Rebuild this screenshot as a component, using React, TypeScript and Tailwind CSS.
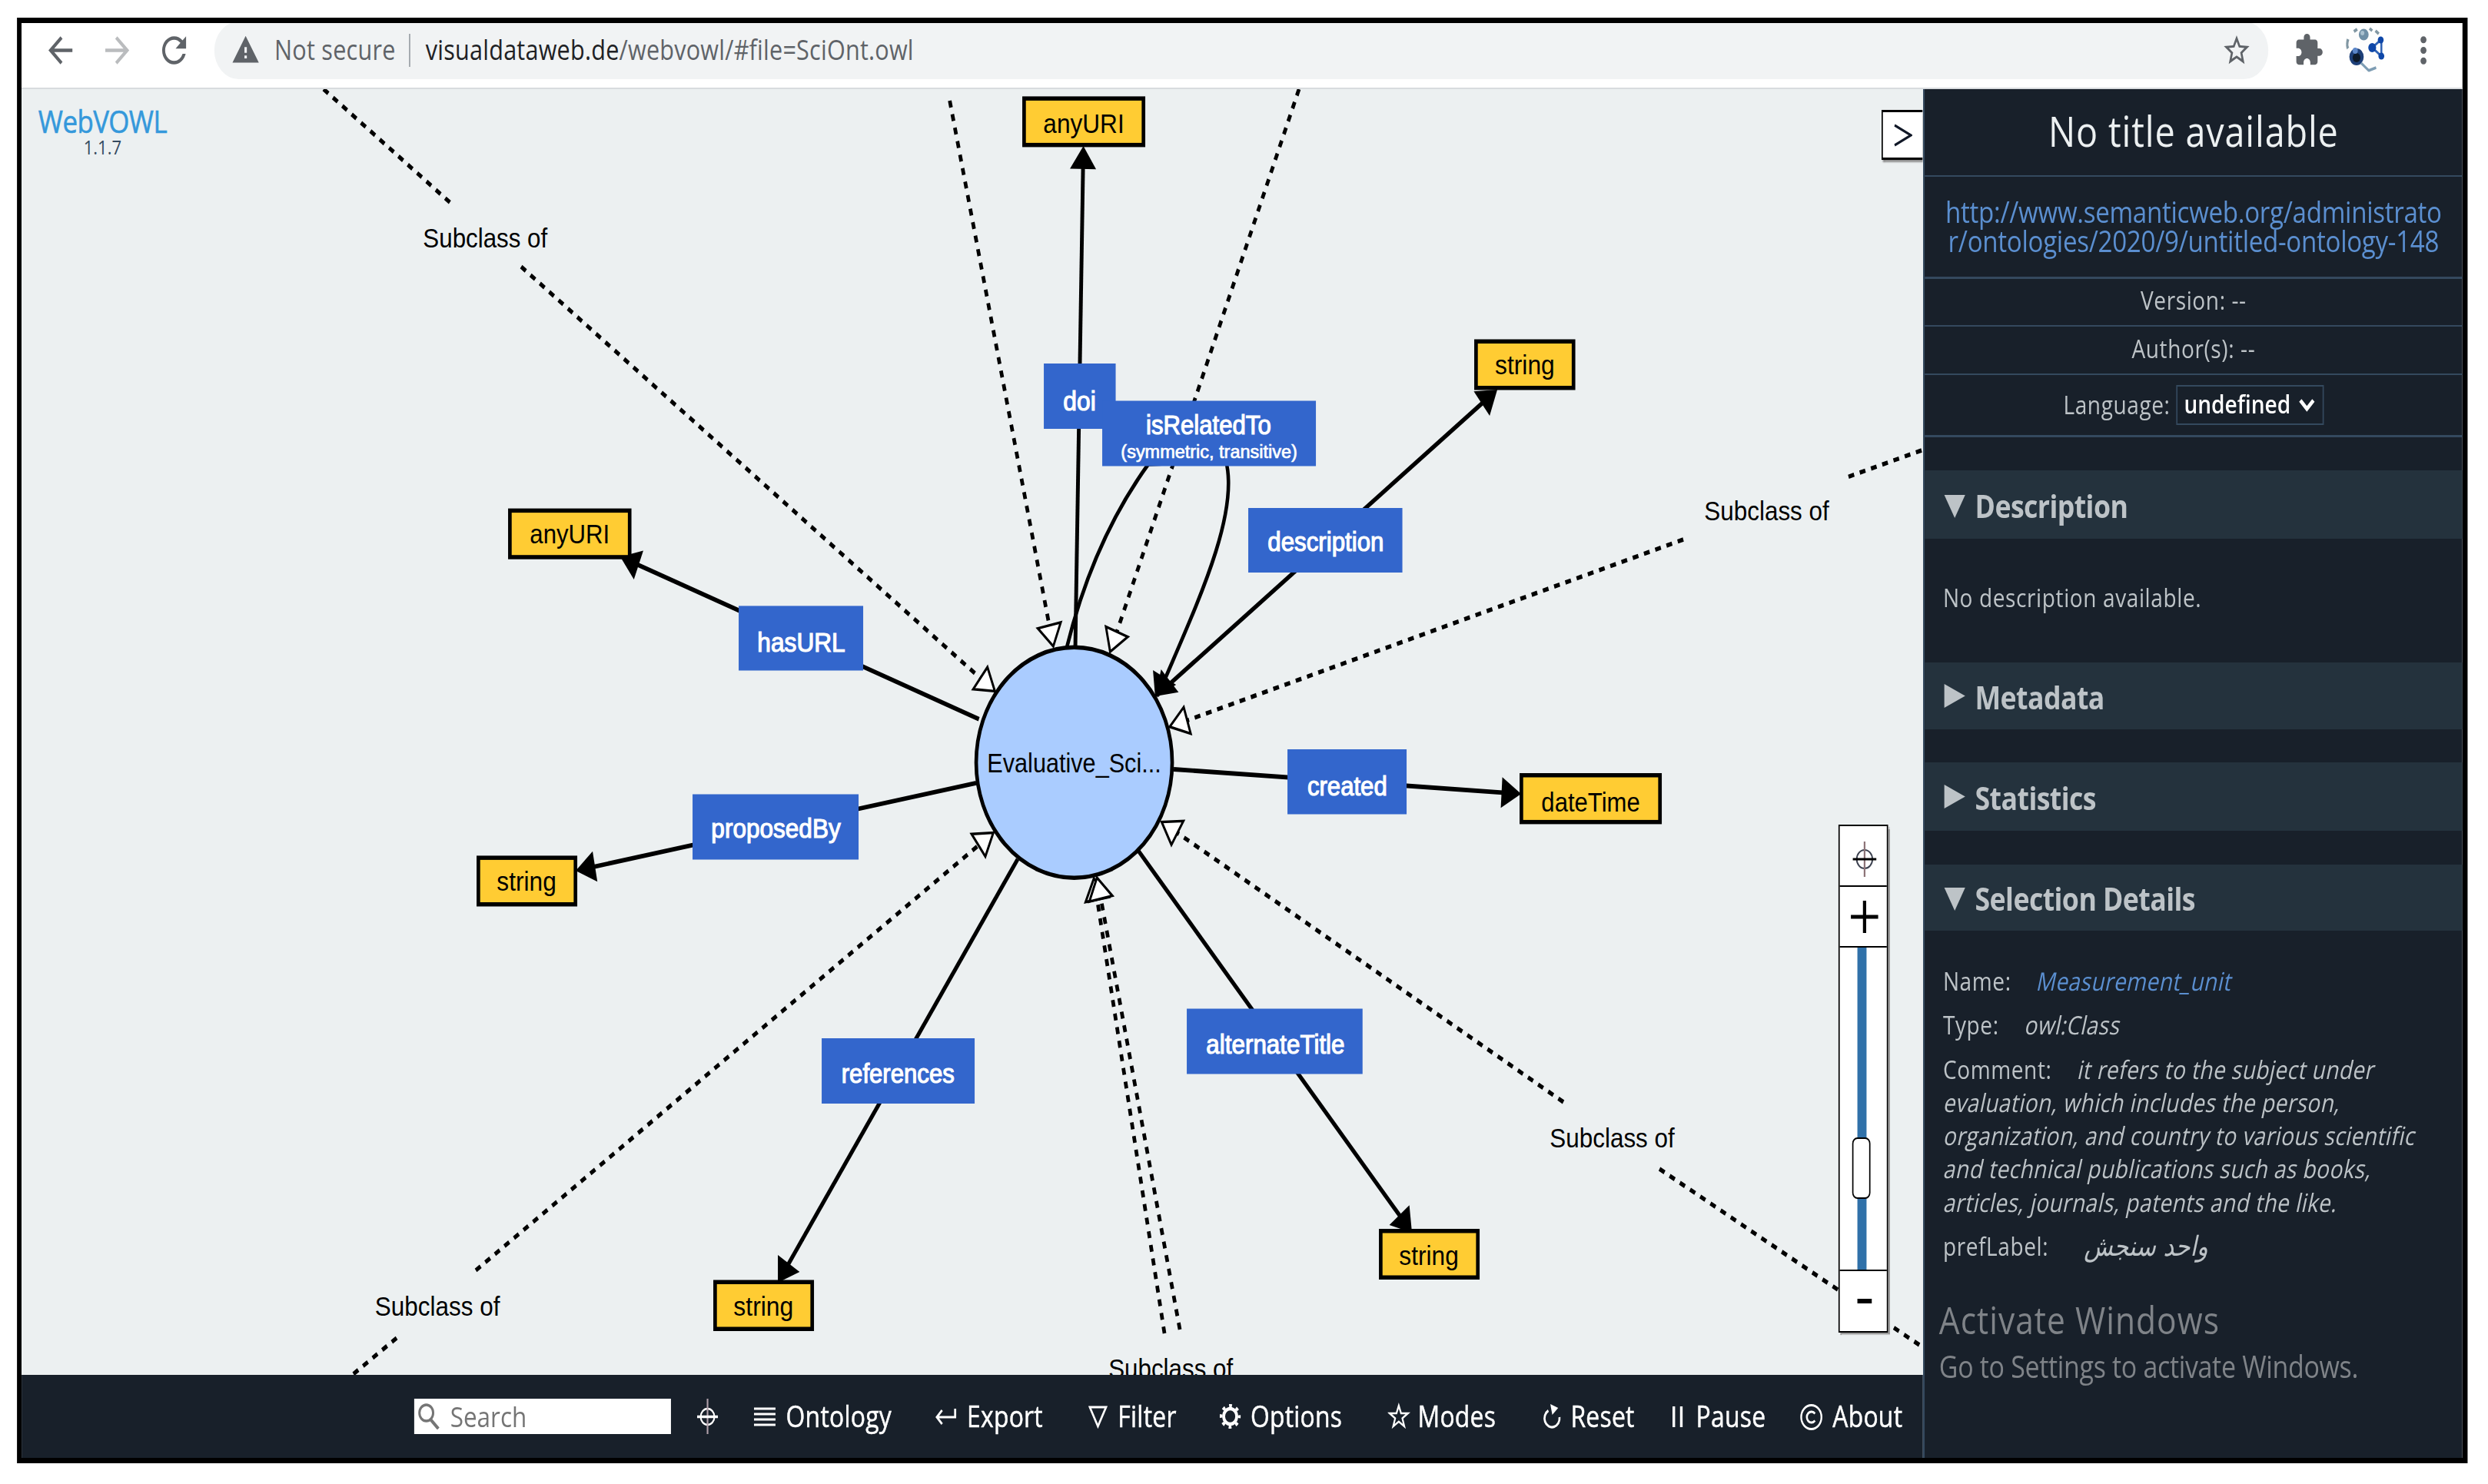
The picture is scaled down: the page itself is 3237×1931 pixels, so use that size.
import type { ReactNode } from 'react'
import clsx from 'clsx'
import {
  MdArrowBack,
  MdArrowForward,
  MdExtension,
  MdMoreVert,
  MdRefresh,
  MdStarBorder,
  MdWarning,
} from 'react-icons/md'

// The whole window is squeezed horizontally by this factor.
const SQUEEZE = 0.85
const ORIGIN_X = 28
const ORIGIN_Y = 116

const px = (x: number) => (x - ORIGIN_X) / SQUEEZE
const py = (y: number) => y - ORIGIN_Y

type Point = [number, number]

type Box = {
  label: string
  rect: [number, number, number, number]
  text: [number, number, number]
  sub?: { label: string; text: [number, number, number] }
}

const DATATYPES: Box[] = [
  { label: 'anyURI', rect: [1330, 125.4, 1490, 191.4], text: [1359, 1461, 173] },
  { label: 'string', rect: [1918, 441.5, 2049.5, 507.5], text: [1946.7, 2021, 487.4] },
  { label: 'anyURI', rect: [661, 661.6, 821.5, 727.7], text: [691, 791.5, 707] },
  { label: 'string', rect: [620, 1113.4, 751, 1179.5], text: [648, 722, 1159.4] },
  { label: 'dateTime', rect: [1977, 1006, 2162, 1072.4], text: [2007, 2132, 1056] },
  { label: 'string', rect: [928, 1665.5, 1059, 1732], text: [956, 1030.6, 1712] },
  { label: 'string', rect: [1794, 1599, 1925, 1665], text: [1822, 1896, 1646] },
]

const PROPERTIES: Box[] = [
  { label: 'doi', rect: [1358, 473, 1451.5, 558], text: [1385, 1424, 533.8] },
  {
    label: 'isRelatedTo',
    rect: [1434, 521.5, 1712, 606.5],
    text: [1492.7, 1652, 565.4],
    sub: { label: '(symmetric, transitive)', text: [1460, 1686, 596] },
  },
  { label: 'description', rect: [1624, 661, 1824.5, 745], text: [1651, 1798.7, 717] },
  { label: 'hasURL', rect: [961, 788.4, 1123, 872.5], text: [987, 1098, 847.8] },
  { label: 'proposedBy', rect: [901, 1033.5, 1117, 1118.5], text: [927, 1092, 1089.7] },
  { label: 'created', rect: [1675, 975, 1830, 1059.5], text: [1702.6, 1803, 1035] },
  { label: 'alternateTitle', rect: [1544, 1312.5, 1772.7, 1397.5], text: [1571, 1747.8, 1371.5] },
  { label: 'references', rect: [1069, 1351, 1268, 1436], text: [1096.4, 1240, 1409] },
]

const SUBCLASS_LABELS: [number, number, number][] = [
  [552, 710.5, 322],
  [2219, 2378, 677],
  [2018, 2177, 1492.6],
  [489.5, 648.7, 1712.5],
  [1443.8, 1602.5, 1793],
]

const SOLID: { from: Point; to: Point }[] = [
  { from: [1399, 842], to: [1409.5, 190] },
  { from: [1273.6, 935.7], to: [807, 724.5] },
  { from: [1270, 1018.8], to: [749, 1133] },
  { from: [1527, 1001], to: [1979, 1033] },
  { from: [1481, 1107], to: [1837, 1604] },
  { from: [1324, 1118], to: [1012, 1669] },
  { from: [1505, 905], to: [1948, 507] },
]

const DOTTED: { from: Point; to: Point; arrow?: boolean }[] = [
  { from: [421, 116], to: [586, 264] },
  { from: [678, 347], to: [1295, 900], arrow: true },
  { from: [1235.6, 131], to: [1370.5, 842], arrow: true },
  { from: [1690, 116], to: [1444, 849], arrow: true },
  { from: [2500, 586], to: [2403, 621] },
  { from: [2190, 702], to: [1521, 946], arrow: true },
  { from: [2034, 1434], to: [1510.6, 1069], arrow: true },
  { from: [2159, 1521], to: [2500, 1752] },
  { from: [1515, 1735], to: [1423, 1142], arrow: true },
  { from: [1535, 1730], to: [1427, 1141], arrow: true },
  { from: [619, 1653], to: [1293, 1083], arrow: true },
  { from: [516, 1741], to: [450, 1796] },
]

function Arrow({ from, to, hollow }: { from: Point; to: Point; hollow?: boolean }) {
  const dx = px(to[0]) - px(from[0])
  const dy = to[1] - from[1]
  const angle = (Math.atan2(dy, dx) * 180) / Math.PI

  return (
    <path
      d={hollow ? 'M-29 -18L-1 0L-29 18Z' : 'M-30 -20L0 0L-30 20Z'}
      transform={`translate(${px(to[0])} ${py(to[1])}) rotate(${angle})`}
      className={hollow ? 'fill-white stroke-black' : 'fill-black'}
      strokeWidth={hollow ? 3.4 : 0}
    />
  )
}

// Ends the stroke before the arrowhead so that it does not poke through the tip.
function shorten(from: Point, to: Point, by: number): Point {
  const dx = px(to[0]) - px(from[0])
  const dy = to[1] - from[1]
  const len = Math.hypot(dx, dy)
  return [px(to[0]) - (dx / len) * by, py(to[1]) - (dy / len) * by]
}

function Label({ at, size = 35.5, className, children }: {
  at: [number, number, number]
  size?: number
  className?: string
  children: string
}) {
  const [x1, x2, y] = at
  return (
    <text
      x={px(x1) - 2}
      y={py(y)}
      fontSize={size}
      textLength={(x2 - x1) / SQUEEZE + 4}
      lengthAdjust="spacingAndGlyphs"
      className={className}
    >
      {children}
    </text>
  )
}

function Graph() {
  return (
    <svg
      width={2910}
      height={1673}
      className="block font-['Liberation_Sans',Arial,sans-serif]"
    >
      {DOTTED.map(({ from, to, arrow }, i) => {
        const end = shorten(from, to, arrow ? 28 : 0)
        return (
          <g key={i}>
            <line
              x1={px(from[0])}
              y1={py(from[1])}
              x2={end[0]}
              y2={end[1]}
              className="stroke-black"
              strokeWidth={5.6}
              strokeDasharray="9 9"
            />
            {arrow && <Arrow from={from} to={to} hollow />}
          </g>
        )
      })}

      {SOLID.map(({ from, to }, i) => {
        const end = shorten(from, to, 20)
        return (
          <g key={i}>
            <line
              x1={px(from[0])}
              y1={py(from[1])}
              x2={end[0]}
              y2={end[1]}
              className="stroke-black"
              strokeWidth={5.8}
            />
            <Arrow from={from} to={to} />
          </g>
        )
      })}

      {/* isRelatedTo loops back to its own class */}
      <path
        d={`M${px(1388)} ${py(842)} C${px(1412)} ${py(745)} ${px(1450)} ${py(665)} ${px(1494)} ${py(604)} L${px(1595)} ${py(600)} C${px(1612)} ${py(668)} ${px(1560)} ${py(780)} ${px(1515)} ${py(885)}`}
        className="fill-none stroke-black"
        strokeWidth={5.4}
      />
      <Arrow from={[1533, 842]} to={[1503, 908]} />
      <Arrow from={[1556, 850]} to={[1503, 906]} />

      <ellipse
        cx={px(1397.5)}
        cy={py(992.3)}
        rx={150}
        ry={150}
        className="fill-[#aaccff] stroke-black"
        strokeWidth={5.5}
      />
      <Label at={[1286, 1509, 1005.5]}>Evaluative_Sci...</Label>

      {DATATYPES.map(({ label, rect: [x1, y1, x2, y2], text }, i) => (
        <g key={i}>
          <rect
            x={px(x1) + 2.75}
            y={py(y1) + 2.75}
            width={(x2 - x1) / SQUEEZE - 5.5}
            height={y2 - y1 - 5.5}
            className="fill-[#ffcc33] stroke-black"
            strokeWidth={5.5}
          />
          <Label at={text}>{label}</Label>
        </g>
      ))}

      {PROPERTIES.map(({ label, rect: [x1, y1, x2, y2], text, sub }) => (
        <g key={label}>
          <rect
            x={px(x1)}
            y={py(y1)}
            width={(x2 - x1) / SQUEEZE}
            height={y2 - y1}
            className="fill-[#3366cc]"
          />
          <Label at={text} className="fill-white stroke-white stroke-[1.2]">{label}</Label>
          {sub && (
            <Label at={sub.text} size={24} className="fill-white stroke-white stroke-[0.7]">
              {sub.label}
            </Label>
          )}
        </g>
      ))}

      {SUBCLASS_LABELS.map((at, i) => (
        <Label key={i} at={at}>Subclass of</Label>
      ))}
    </svg>
  )
}

function Avatar() {
  return (
    <svg viewBox="0 0 60 60" className="ml-[34px] size-[60px] shrink-0">
      <circle cx="30" cy="30" r="29" className="fill-[#fdfdfd]" />
      <circle cx="27" cy="10" r="7.5" className="fill-[#6f8fa6]" />
      <circle cx="25" cy="8" r="3" className="fill-[#a9c0cf]" />
      <path d="M12 6L17 3M36 2L40 5M45 5L50 9M3 16Q0 24 3 28" className="fill-none stroke-[#8197a3]" strokeWidth="4" />
      <path d="M40 27L53 17M40 27L54 38M54 17V38" className="fill-none stroke-[#2f62b5]" strokeWidth="3" />
      <circle cx="40" cy="27" r="6" className="fill-[#0f47a8]" />
      <circle cx="53" cy="17" r="4.5" className="fill-[#0f47a8]" />
      <circle cx="54" cy="38" r="4.5" className="fill-[#0f47a8]" />
      <circle cx="16" cy="39" r="11" className="fill-[#1d3f78]" />
      <circle cx="16" cy="40" r="6" className="fill-[#0d1a2a]" />
      <circle cx="14" cy="31" r="4" className="fill-[#5b86c8]" />
      <path d="M23 47L35 57M34 57L46 53" className="fill-none stroke-[#7d9cb3]" strokeWidth="3.5" />
    </svg>
  )
}

function BrowserBar() {
  return (
    <div className="flex h-[86px] shrink-0 items-center overflow-hidden border-b-2 border-[#d8dbde] bg-white pb-[14px] pl-8 font-['Open_Sans',sans-serif] text-[#5f6368]">
      <div className="flex shrink-0 gap-8">
        <MdArrowBack className="size-[55px]" />
        <MdArrowForward className="size-[55px] text-[#babcbe]" />
        <MdRefresh className="size-[55px]" />
      </div>
      <div className="ml-[34px] flex h-[75px] w-[3144px] shrink-0 items-center rounded-full bg-[#f1f3f4] pl-[26px] pr-[25px]">
        <MdWarning className="size-[44px] shrink-0" />
        <span className="ml-[22px] text-[36px] tracking-[0.3px]">Not secure</span>
        <div className="ml-[20px] h-[43px] w-[2px] bg-[#9aa0a6]" />
        <span className="ml-[24px] text-[36px] tracking-[0.25px]">
          <span className="text-[#202124]">visualdataweb.de</span>/webvowl/#file=SciOnt.owl
        </span>
        <MdStarBorder className="ml-auto size-[47px]" />
      </div>
      <MdExtension className="ml-[39px] size-[46px] shrink-0" />
      <Avatar />
      <MdMoreVert className="ml-[31px] size-[55px] shrink-0" />
    </div>
  )
}

function ZoomControl() {
  return (
    <div className="absolute left-[2781px] top-[957px] flex h-[661px] w-[76px] flex-col border-2 border-black bg-white shadow-[3px_3px_1px_#999]">
      <div className="flex h-[79px] items-center justify-center border-b-2 border-black">
        <svg viewBox="0 0 38 46" className="mt-2 ml-1 h-[46px] w-[38px]">
          <circle cx="19" cy="23" r="12" className="fill-none stroke-[#3d4250]" strokeWidth="2.2" />
          <path d="M19 0V46" className="stroke-[#8d7478]" strokeWidth="2.6" />
          <path d="M1 23H37" className="stroke-black" strokeWidth="3" />
        </svg>
      </div>
      <div className="flex h-[79px] items-center justify-center border-b-2 border-black pl-1">
        <svg viewBox="0 0 42 42" className="size-[42px]">
          <path d="M0 21H42M21 0V42" className="stroke-black" strokeWidth="5" />
        </svg>
      </div>
      <div className="relative flex flex-1 justify-center">
        <div className="mr-1 w-[14px] bg-[#3071a9]" />
        <div className="absolute left-[19px] top-[247px] h-[80px] w-[28px] rounded-lg border-2 border-black bg-white" />
      </div>
      <div className="flex h-[80px] items-center justify-center border-t-2 border-black pl-1">
        <div className="h-[6px] w-[22px] bg-black" />
      </div>
    </div>
  )
}

function GraphArea() {
  return (
    <div className="relative h-[1673px] shrink-0 overflow-hidden bg-[#ecf0f1]">
      <Graph />
      <div className="absolute left-[25px] top-[20px] w-[198px] text-center">
        <p className="text-[41px] leading-[43px] tracking-[-0.7px] text-[#3498db] [-webkit-text-stroke:0.6px_#3498db]">WebVOWL</p>
        <p className="text-[26px] leading-[25px] text-[#34495e]">1.1.7</p>
      </div>
      <div className="absolute right-0 top-[27px] flex h-[65px] w-[63px] items-center justify-center border-y-[3px] border-l-2 border-black bg-white shadow-[2px_3px_2px_#888]">
        <svg viewBox="0 0 28 30" className="h-[30px] w-[28px]">
          <path d="M1 2L26 15L1 28" className="fill-none stroke-[#111827]" strokeWidth="3.2" />
        </svg>
      </div>
      <ZoomControl />
    </div>
  )
}

const MENU: { label: string; width: string; iconBox: string; icon: ReactNode }[] = [
  {
    label: 'Ontology',
    width: 'w-[277px]',
    iconBox: 'w-[49px]',
    icon: <path d="M0 11H33M0 18H33M0 25H33M0 32H33" strokeWidth="3" />,
  },
  {
    label: 'Export',
    width: 'w-[235px]',
    iconBox: 'w-[49px]',
    icon: <path d="M31 11V22H3M11 13L3 22L11 31" strokeWidth="3.2" />,
  },
  {
    label: 'Filter',
    width: 'w-[200px]',
    iconBox: 'w-[45px]',
    icon: <path d="M2 9H27L14.5 34Z" strokeWidth="3" />,
  },
  {
    label: 'Options',
    width: 'w-[258px]',
    iconBox: 'w-[48px]',
    icon: (
      <>
        <circle cx="17" cy="21" r="10" strokeWidth="4.5" />
        <circle cx="17" cy="21" r="14" strokeWidth="4" strokeDasharray="4.5 6.5" strokeDashoffset="2.2" />
      </>
    ),
  },
  {
    label: 'Modes',
    width: 'w-[237px]',
    iconBox: 'w-[46px]',
    icon: (
      <path d="M17 7L20.5 17H31L22.5 23.5L25.5 34L17 27.8L8.5 34L11.5 23.5L3 17H13.5Z" strokeWidth="2.6" />
    ),
  },
  {
    label: 'Reset',
    width: 'w-[198px]',
    iconBox: 'w-[43px]',
    icon: (
      <>
        <path d="M9 13.5A11.5 11.5 0 1 0 26 22" strokeWidth="3.2" />
        <path d="M12 5L24 10L15 19Z" className="fill-white" strokeWidth="0" />
      </>
    ),
  },
  {
    label: 'Pause',
    width: 'w-[196px]',
    iconBox: 'w-[37px]',
    icon: <path d="M3 8V35M14.5 8V35" strokeWidth="4" />,
  },
  {
    label: 'About',
    width: 'w-[186px]',
    iconBox: 'w-[50px]',
    icon: (
      <>
        <circle cx="17.5" cy="22" r="15.5" strokeWidth="2.8" />
        <path d="M23 17.5A7 7 0 1 0 23 26.5" strokeWidth="3" />
      </>
    ),
  },
]

function MenuBar() {
  return (
    <nav className="flex flex-1 items-center bg-[#18202a] pl-[601px] text-[37.5px] text-white">
      <div className="flex h-[46px] w-[393px] shrink-0 items-center bg-white pl-[5px]">
        <svg viewBox="0 0 35 34" className="h-[34px] w-[35px]">
          <circle cx="13.5" cy="12.5" r="10.5" className="fill-none stroke-[#757575]" strokeWidth="3.5" />
          <path d="M20 21L32 33" className="stroke-[#757575]" strokeWidth="4.5" />
        </svg>
        <span className="ml-[15px] text-[37px] leading-[46px] text-[#757575]">Search</span>
      </div>
      <svg viewBox="0 0 32 46" className="ml-[40px] h-[46px] w-[32px] shrink-0">
        <circle cx="16" cy="23.5" r="10.5" className="fill-none stroke-white" strokeWidth="2.5" />
        <path d="M16 0V46" className="stroke-[#b0a0aa]" strokeWidth="2.5" />
        <path d="M0 23.5H32" className="stroke-white" strokeWidth="3.5" />
      </svg>
      <ul className="ml-[55px] flex">
        {MENU.map(({ label, width, iconBox, icon }) => (
          <li key={label} className={clsx('flex shrink-0 items-center', width)}>
            <span className={clsx('shrink-0', iconBox)}>
              <svg viewBox="0 0 35 42" className="h-[42px] w-[35px] fill-none stroke-white">
                {icon}
              </svg>
            </span>
            <span className="leading-[50px] tracking-[0.3px] [-webkit-text-stroke:0.5px_white]">{label}</span>
          </li>
        ))}
      </ul>
    </nav>
  )
}

function SectionHeader({ title, open, className }: { title: string; open?: boolean; className: string }) {
  return (
    <h3 className={clsx('flex items-center bg-[#24323d] pl-[29px] text-[42px] font-bold tracking-[-0.7px]', className)}>
      <svg viewBox="0 0 34 34" className={clsx('h-[34px] w-[34px] shrink-0 fill-[#bdc3c7]', open && 'mt-[4px]')}>
        <path d={open ? 'M1 2H33L17 32Z' : 'M1 1V32L33 16.5Z'} />
      </svg>
      <span className="ml-[14px] pt-[2px] leading-[60px]">{title}</span>
    </h3>
  )
}

function Slanted({ className, children }: { className?: string; children: string }) {
  return (
    <span className={clsx('inline-block origin-[0_75%] -skew-x-[14deg] tracking-[0.5px]', className)}>
      {children}
    </span>
  )
}

const COMMENT_LINES = [
  'evaluation, which includes the person,',
  'organization, and country to various scientific',
  'and technical publications such as books,',
  'articles, journals, patents and the like.',
]

function Sidebar() {
  return (
    <aside className="w-[826px] shrink-0 overflow-hidden border-l-[3px] border-[#34495e] bg-[#18202a] text-[33px] tracking-[0.7px] text-[#bdc3c7]">
      <h1 className="flex h-[114px] items-center justify-center border-b-2 border-[#34495e] pb-1 text-[55px] tracking-[1px] text-[#ecf0f1]">
        No title available
      </h1>
      <p className="h-[133px] border-b-[3px] border-[#34495e] pt-[26px] text-center text-[39px] leading-[38px] tracking-[-0.36px] text-[#5b8fd0]">
        http://www.semanticweb.org/administrato
        <br />
        r/ontologies/2020/9/untitled-ontology-148
      </p>
      <p className="flex h-[62px] items-center justify-center border-b-2 border-[#34495e] pb-1">Version: --</p>
      <p className="flex h-[63px] items-center justify-center border-b-2 border-[#34495e] pb-1">Author(s): --</p>
      <div className="flex h-[81px] items-center justify-center border-b-[3px] border-[#34495e]">
        <span>Language:</span>
        <button
          type="button"
          className="ml-[9px] flex h-[52px] w-[226px] items-center justify-between border-2 border-[#34495e] pl-[10px] pr-[11px] font-semibold tracking-normal text-white"
        >
          <span className="-mt-[2px]">undefined</span>
          <svg viewBox="0 0 26 18" className="h-[18px] w-[26px]">
            <path d="M3 3L13 14L23 3" className="fill-none stroke-white" strokeWidth="5" />
          </svg>
        </button>
      </div>

      <SectionHeader title="Description" open className="mt-[43px] h-[89px]" />
      <p className="flex h-[161px] items-center pb-[7px] pl-[28px]">No description available.</p>
      <SectionHeader title="Metadata" className="h-[87px]" />
      <SectionHeader title="Statistics" className="mt-[43px] h-[89px]" />
      <SectionHeader title="Selection Details" open className="mt-[44px] h-[86px]" />

      <div className="flex flex-col gap-[14px] whitespace-nowrap pl-[28px] pt-[44px] leading-[43.3px]">
        <p>
          Name:<Slanted className="ml-[38px] text-[#5b8fd0]">Measurement_unit</Slanted>
        </p>
        <p>
          Type:<Slanted className="ml-[38px]">owl:Class</Slanted>
        </p>
        <div>
          Comment:<Slanted className="ml-[38px]">it refers to the subject under</Slanted>
          {COMMENT_LINES.map((line) => (
            <div key={line} className="h-[43.3px]">
              <Slanted>{line}</Slanted>
            </div>
          ))}
        </div>
        <p className="h-[43.3px]">
          prefLabel:
          <em dir="rtl" className="ml-[54px] font-['DejaVu_Sans',sans-serif] text-[36px] leading-[20px] tracking-normal">
            واحد سنجش
          </em>
        </p>
      </div>

      <div className="mt-[44px] whitespace-nowrap pl-[22px] text-[#7f8388]">
        <p className="text-[50px] leading-[60px] tracking-[1.2px]">Activate Windows</p>
        <p className="mt-[3px] text-[40px] leading-[56px] tracking-[-0.4px]">Go to Settings to activate Windows.</p>
      </div>
    </aside>
  )
}

export default function App() {
  return (
    <div className="h-[1931px] w-[3237px] overflow-hidden bg-white">
      <div className="flex h-[1931px] w-[3808px] origin-top-left scale-x-[0.85] items-start pl-[26px] pt-[23px] font-['Open_Sans','Noto_Sans',sans-serif]">
        <div className="flex h-[1881px] w-[3751px] shrink-0 flex-col overflow-hidden border-y-[7px] border-l-[7px] border-r-8 border-black">
          <BrowserBar />
          <div className="flex min-h-0 flex-1">
            <main className="flex w-[2910px] shrink-0 flex-col">
              <GraphArea />
              <MenuBar />
            </main>
            <Sidebar />
          </div>
        </div>
      </div>
    </div>
  )
}
